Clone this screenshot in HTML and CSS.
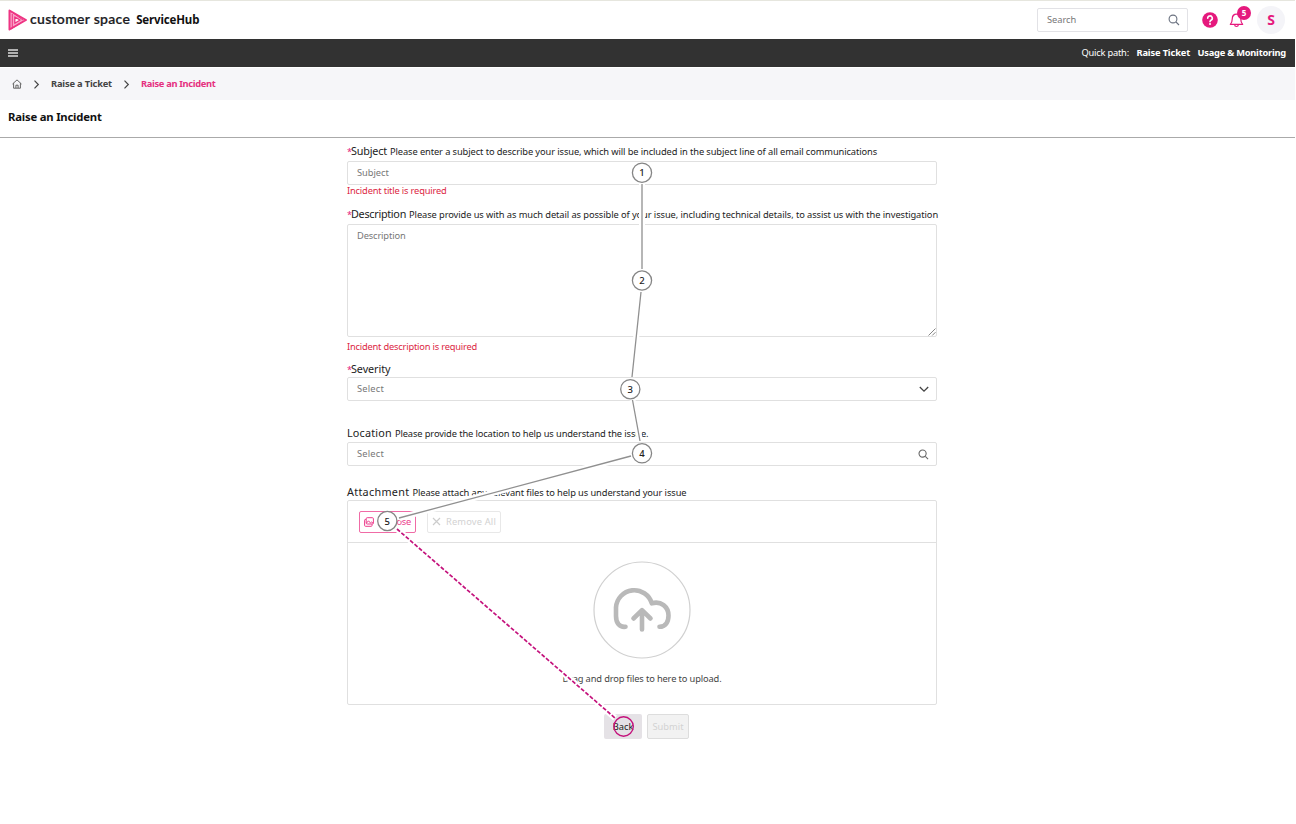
FILE: index.html
```html
<!DOCTYPE html>
<html lang="en">
<head>
<meta charset="utf-8">
<title>Raise an Incident</title>
<link rel="stylesheet" href="styles.css">
</head>
<body>
<div class="page">
  <header class="top">
    <svg class="logo" width="20" height="22" viewBox="0 0 20 22" fill="none" stroke="#ee3483" stroke-linejoin="round"><path d="M1.500 1.500 18 11 1.500 20.500Z" fill="#f9a3c8" stroke-width="2"/><path d="M6.800 8 12 11 6.800 14.200Z" fill="#fff" stroke-width="1.300"/><path d="M1.500 1.500 15 11M4.300 5v14M3 20 15 12.500" stroke-width="1"/></svg>
    <span class="brand">customer space</span>
    <span class="product">ServiceHub</span>
    <div class="search"><span class="ph">Search</span>
      <svg width="12" height="12" viewBox="0 0 12 12" fill="none" stroke="#6b7280" stroke-width="1.100"><circle cx="5" cy="5" r="3.900"/><path d="m8 8 3 3"/></svg>
    </div>
    <svg class="help" width="16" height="16" viewBox="0 0 16 16"><circle cx="8" cy="8" r="7.800" fill="#e5197d"/><path d="M5.700 6.300a2.300 2.300 0 1 1 3.300 2c-.7.400-1 .8-1 1.500" fill="none" stroke="#fff" stroke-width="1.600" stroke-linecap="round"/><circle cx="8" cy="12.100" r="1" fill="#fff"/></svg>
    <div class="bell">
      <svg width="15" height="15" viewBox="0 0 14 15" fill="none" stroke="#e5197d" stroke-width="1.200" stroke-linejoin="round"><path d="M7 1.200c-2.600 0-4.200 2-4.200 4.300 0 3.500-.8 4.500-2 5.800h12.400c-1.200-1.300-2-2.300-2-5.800C11.200 3.200 9.600 1.200 7 1.200Z"/><path d="M5 11.500c.2 1.300 1 2 2 2s1.800-.7 2-2"/></svg>
      <span class="badge">5</span>
    </div>
    <div class="avatar">S</div>
  </header>
  <nav class="bar">
    <svg width="10" height="8" viewBox="0 0 10 8" stroke="#ddd" stroke-width="1.500"><path d="M0 1h10M0 4h10M0 7h10"/></svg>
    <div class="quick"><span class="qp">Quick path:</span><b class="q1">Raise Ticket</b><b class="q2">Usage &amp; Monitoring</b></div>
  </nav>
  <div class="crumbs">
    <svg class="home" width="10" height="10" viewBox="0 0 10 10" fill="none" stroke="#555" stroke-width=".9"><path d="M.5 5 5 .9 9.500 5M1.600 4.200v5h6.800v-5M3.900 9V6.200h2.200V9"/></svg>
    <svg class="chev" width="6" height="9" viewBox="0 0 6 9" fill="none" stroke="#444" stroke-width="1.200"><path d="m.5 .7 3.800 3.800L.5 8.300"/></svg>
    <b class="c1">Raise a Ticket</b>
    <svg class="chev" width="6" height="9" viewBox="0 0 6 9" fill="none" stroke="#444" stroke-width="1.200"><path d="m.5 .7 3.800 3.800L.5 8.300"/></svg>
    <b class="c2">Raise an Incident</b>
  </div>
  <div class="title"><b>Raise an Incident</b></div>
  <main class="form">
    <div class="label l1"><i>*</i><span class="name">Subject</span><span class="hint">Please enter a subject to describe your issue, which will be included in the subject line of all email communications</span></div>
    <div class="field"><span class="ph">Subject</span></div>
    <div class="error e1"><span>Incident title is required</span></div>
    <div class="label l2"><i>*</i><span class="name">Description</span><span class="hint">Please provide us with as much detail as possible of your issue, including technical details, to assist us with the investigation</span></div>
    <div class="field area"><span class="ph">Description</span>
      <svg width="8" height="8" viewBox="0 0 8 8" stroke="#777" stroke-width=".9"><path d="M.5 7.500l7-7M4.200 7.500l3.300-3.300"/></svg></div>
    <div class="error e2"><span>Incident description is required</span></div>
    <div class="label l3"><i>*</i><span class="name">Severity</span></div>
    <div class="field"><span class="ph select">Select</span>
      <svg width="10" height="7" viewBox="0 0 10 7" fill="none" stroke="#444" stroke-width="1.300"><path d="m.8 1 4.200 4.200L9.200 1"/></svg></div>
    <div class="label l4"><span class="name">Location</span><span class="hint">Please provide the location to help us understand the issue.</span></div>
    <div class="field"><span class="ph select">Select</span>
      <svg width="11" height="11" viewBox="0 0 12 12" fill="none" stroke="#666" stroke-width="1.200"><circle cx="5" cy="5" r="3.900"/><path d="m8 8 3 3"/></svg></div>
    <div class="label l5"><span class="name">Attachment</span><span class="hint">Please attach any relevant files to help us understand your issue</span></div>
    <section class="upload">
      <div class="tools">
        <div class="choose"><svg width="10" height="10" viewBox="0 0 10 10" fill="none" stroke="#ec3d8c" stroke-width="1"><rect x="2.200" y=".7" width="7.200" height="6.300" rx="1"/><path d="M2 2.500H1.300q-.7 0-.7.700v5.200q0 .9.900.9h5.700q.8 0 .8-.800V7.200M2.500 6l2-2.200 2 2.200 1.200-1L9.200 6.300"/></svg><span>Choose</span></div>
        <div class="remove"><svg width="9" height="9" viewBox="0 0 9 9" stroke="#ccc" stroke-width="1.200"><path d="m1 1 7 7M8 1 1 8"/></svg><span>Remove All</span></div>
      </div>
      <div class="drop">
        <svg width="98" height="98" viewBox="593 561 98 98" fill="none"><circle cx="642" cy="610" r="48" stroke="#d0d0d0" stroke-width="1.200"/><g stroke="#b9b9b9" stroke-width="4.600" stroke-linecap="round" stroke-linejoin="round"><path d="M625.500 626.800C619.500 627.500 616 623 616 616V607.500A18.300 18.300 0 0 1 651.800 603.300C661 600.500 668.500 607 668.500 615.500C668.500 622 665.500 626.800 659.500 626.800"/><path d="M642 629.500V610.500M633.500 618.500 642 610.200 650.500 618.500"/></g></svg>
        <span>Drag and drop files to here to upload.</span>
      </div>
    </section>
    <div class="actions"><div class="back"><span>Back</span></div><div class="submit"><span>Submit</span></div></div>
  </main>
  <svg class="flow" width="1296" height="824" viewBox="0 0 1296 824" fill="none">
    <g stroke="#fff" stroke-width="6"><path d="M642 184V269M641 292 632 377M632.500 400 640 441M631 456 399 518M397 529 615 718"/></g>
    <g stroke="#909090" stroke-width="1.300"><path d="M642 184V269M641 292 632 377M632.500 400 640 441M631 456 399 518"/></g>
    <path d="M397 529 615 718" stroke="#c4127c" stroke-width="1.700" stroke-dasharray="4 1.800"/>
    <g fill="#fff" stroke="#858585" stroke-width="1.300"><circle cx="642" cy="172.700" r="9.600"/><circle cx="642" cy="280.500" r="9.600"/><circle cx="630.300" cy="389.200" r="9.600"/><circle cx="642" cy="453.300" r="9.600"/><circle cx="387.300" cy="521" r="9.600"/></g>
    <circle cx="623.600" cy="726.500" r="9.700" stroke="#c4127c" stroke-width="1.400"/>
    <g class="num"><text x="642" y="176.200">1</text><text x="642" y="284">2</text><text x="630.300" y="392.700">3</text><text x="642" y="456.800">4</text><text x="387.300" y="524.500">5</text></g>
  </svg>
</div>
</body>
</html>
```
FILE: styles.css
```css
* { box-sizing: border-box; }
body { margin: 0; background: #fff; color: #222; font: 9.300px/12px "Noto Sans", sans-serif; }
svg { display: block; flex: none; }
span, b { white-space: nowrap; }
.page { position: relative; width: 1295px; height: 824px; overflow: hidden; }
.top { height: 39px; border-top: 1px solid #e6e6de; display: flex; align-items: center; padding-left: 8px; }
.brand { margin-left: 2px; font: 600 14px/16px Lato, sans-serif; letter-spacing: .28px; color: #1c1c24; -webkit-text-stroke: .2px #1c1c24; position: relative; top: -1px; }
.product { margin-left: 6px; font-size: 11.500px; font-weight: 700; color: #111; letter-spacing: -.16px; }
.search { margin-left: auto; width: 151px; height: 24px; border: 1px solid #e2e2e6; border-radius: 2px; display: flex; align-items: center; justify-content: space-between; padding: 0 7px 0 9px; }
.ph { color: #777; letter-spacing: -.03px; }
.help { margin-left: 14px; }
.bell { position: relative; margin-left: 11px; }
.badge { position: absolute; left: 8px; top: -7px; width: 14px; height: 14px; border-radius: 50%; background: #e5197d; color: #fff; font-size: 8px; font-weight: 700; line-height: 14px; text-align: center; }
.avatar { margin: 0 10px 0 13px; width: 28px; height: 28px; border-radius: 50%; background: #f4f4f8; color: #e5197d; font-size: 14px; font-weight: 700; line-height: 28px; text-align: center; }
.bar { height: 28px; background: #323232; color: #fff; display: flex; align-items: center; justify-content: space-between; padding: 0 9px 0 8px; }
.quick { display: flex; gap: 7.500px; }
.qp { letter-spacing: -.2px; }
.q1 { letter-spacing: -.15px; }
.q2 { letter-spacing: -.23px; }
.crumbs { margin-top: 1px; height: 32px; background: #f6f6f9; display: flex; align-items: center; padding-left: 12px; color: #444; }
.c1 { letter-spacing: -.17px; }
.c2 { color: #e5307f; letter-spacing: -.31px; }
.chev { margin: 0 11px 0 12px; }
.title { height: 38px; border-bottom: 1px solid #aaa; padding: 11px 8px; font-size: 11.300px; letter-spacing: -.2px; color: #111; }
.form { width: 590px; margin-left: 347px; }
.label { display: flex; align-items: baseline; height: 15px; line-height: 14px; white-space: nowrap; }
.label i { font-style: normal; color: #e5197d; width: 4px; font-size: 9px; }
.name { font-size: 10.800px; margin-right: 3px; letter-spacing: -.17px; }
.hint { font-size: 9.300px; letter-spacing: -.098px; }
.field { height: 24px; border: 1px solid #e0e0e0; border-radius: 2px; display: flex; align-items: center; justify-content: space-between; padding: 0 7px 0 9px; }
.area { height: 113px; align-items: flex-start; padding: 5px 0 0 9px; }
.area .ph { letter-spacing: -.14px; }
.ph.select { letter-spacing: .2px; }
.area svg { align-self: flex-end; }
.error { color: #dc2643; line-height: 12px; letter-spacing: -.17px; }
.l1 { margin: 6px 0 2px; }
.l2 { margin: 10px 0 2px; }
.l2 .name { letter-spacing: -.28px; }
.l2 .hint { letter-spacing: -.085px; }
.l3 { margin: 9px 0 0; }
.l3 .name { letter-spacing: -.07px; }
.l4 { margin: 25px 0 1px; }
.l4 .name { letter-spacing: .2px; }
.l4 .hint { letter-spacing: -.112px; }
.l5 { margin: 19px 0 0; }
.l5 .name { letter-spacing: .3px; }
.l5 .hint { letter-spacing: -.088px; }
.e2 { margin-top: 4px; letter-spacing: -.196px; }
.upload { height: 205px; border: 1px solid #e0e0e0; border-radius: 2px; }
.tools { height: 42px; border-bottom: 1px solid #e0e0e0; display: flex; align-items: center; gap: 11px; padding-left: 11px; }
.choose, .remove { height: 22px; border: 1px solid #f06ba6; border-radius: 2px; display: flex; align-items: center; }
.choose { width: 57px; padding-left: 4px; gap: 6px; color: #ec3d8c; letter-spacing: -.26px; }
.remove { width: 74px; padding-left: 4px; gap: 5px; border-color: #e8e8e8; color: #d2d2d2; letter-spacing: .17px; }
.drop { display: flex; flex-direction: column; align-items: center; padding-top: 18px; gap: 14px; color: #444; letter-spacing: -.135px; }
.actions { display: flex; gap: 5px; padding: 9px 0 0 257px; }
.back, .submit { height: 25px; border-radius: 2px; display: flex; align-items: center; justify-content: center; }
.back { width: 38px; background: #e5e2e6; }
.submit { width: 42px; background: #f2f2f2; border: 1px solid #ddd; color: #d2d2d2; }
.flow { position: absolute; left: 0; top: 0; }
.num { fill: #222; font-size: 9.500px; font-weight: 500; text-anchor: middle; }
```
